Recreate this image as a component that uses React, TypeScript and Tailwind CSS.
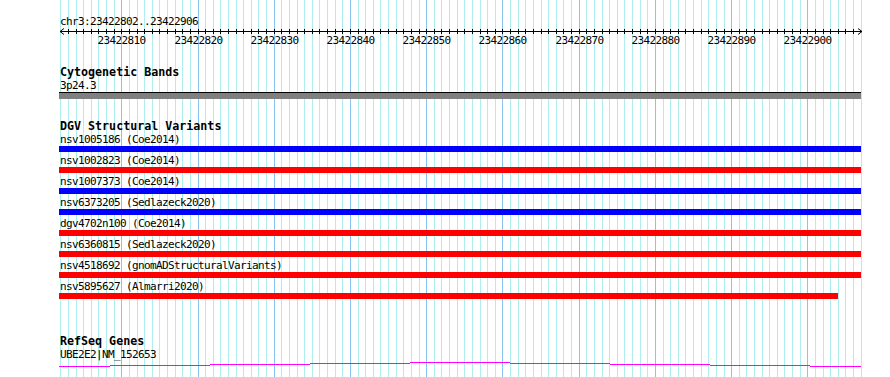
import React from "react";

const X0 = 60.3;
const BP = 7.623;
const START = 23422802;

const mono = "font-['DejaVu_Sans_Mono',monospace] text-black";
const small = `${mono} text-[11px] tracking-[-0.62px] leading-[13px] h-[13px] whitespace-pre`;
const bold = `${mono} font-bold text-[11.67px] leading-[13px] h-[13px] whitespace-pre`;

const variants = [
  { name: "nsv1005186 (Coe2014)", color: "bg-[#0000ff]", w: "w-[802px]" },
  { name: "nsv1002823 (Coe2014)", color: "bg-[#ff0000]", w: "w-[802px]" },
  { name: "nsv1007373 (Coe2014)", color: "bg-[#0000ff]", w: "w-[802px]" },
  { name: "nsv6373205 (Sedlazeck2020)", color: "bg-[#0000ff]", w: "w-[802px]" },
  { name: "dgv4702n100 (Coe2014)", color: "bg-[#ff0000]", w: "w-[802px]" },
  { name: "nsv6360815 (Sedlazeck2020)", color: "bg-[#ff0000]", w: "w-[802px]" },
  { name: "nsv4518692 (gnomADStructuralVariants)", color: "bg-[#ff0000]", w: "w-[802px]" },
  { name: "nsv5895627 (Almarri2020)", color: "bg-[#ff0000]", w: "w-[779px]" },
];

const bpX = (k: number) => Math.round(X0 + k * BP);
const ks = Array.from({ length: 106 }, (_, k) => k);

// background grid, one line per base, darker every 10 bp
function Grid() {
  return (
    <svg className="absolute inset-0" width={890} height={377} shapeRendering="crispEdges">
      {ks.map((k) => {
        const major = (START + k) % 10 === 0;
        return (
          <line
            key={k}
            x1={bpX(k) + 0.5}
            x2={bpX(k) + 0.5}
            y1={0}
            y2={377}
            stroke={major ? "#87c4f0" : "#aeeeee"}
            strokeWidth={1}
          />
        );
      })}
    </svg>
  );
}

function Ruler() {
  const right = bpX(105);
  return (
    <svg width={890} height={18} className="block" shapeRendering="crispEdges">
      <line x1={60} x2={right + 1} y1={3.5} y2={3.5} stroke="#000" />
      <path d="M60 3.5 L64 0.5 M60 3.5 L64 6.5" stroke="#000" fill="none" shapeRendering="auto" />
      <path d={`M${right + 1} 3.5 L${right - 3} 0.5 M${right + 1} 3.5 L${right - 3} 6.5`} stroke="#000" fill="none" shapeRendering="auto" />
      {ks.slice(1, 105).map((k) => (
        <line key={k} x1={bpX(k) + 0.5} x2={bpX(k) + 0.5} y1={1} y2={6} stroke="#000" />
      ))}
      {ks
        .filter((k) => (START + k) % 10 === 0)
        .map((k) => (
          <text
            key={k}
            x={bpX(k) + 0.5}
            y={16}
            textAnchor="middle"
            fontFamily="'DejaVu Sans Mono', monospace"
            fontSize={11}
            letterSpacing={-0.62}
            fill="#000"
          >
            {START + k}
          </text>
        ))}
    </svg>
  );
}

function GeneLine() {
  const segs: [number, number, number][] = [
    [59, 110, 5],
    [110, 210, 4],
    [210, 310, 3],
    [310, 410, 2],
    [410, 510, 1],
    [510, 610, 2],
    [610, 710, 3],
    [710, 810, 4],
    [810, 861, 5],
  ];
  return (
    <svg width={890} height={8} className="block" shapeRendering="crispEdges">
      {segs.map(([a, b, y], i) => (
        <line key={i} x1={a} x2={b} y1={y + 0.5} y2={y + 0.5} stroke="#ff00ff" />
      ))}
    </svg>
  );
}

export default function App() {
  return (
    <div className="relative w-[890px] h-[377px] overflow-hidden bg-white">
      <Grid />
      <div className="relative flex flex-col">
        <div className={`${small} mt-[15px] pl-[60px]`}>chr3:23422802..23422906</div>
        <Ruler />

        <div className={`${bold} mt-[20px] pl-[60px]`}>Cytogenetic Bands</div>
        <div className={`${small} pl-[60px]`}>3p24.3</div>
        <div className="ml-[59px] w-[802px] h-[7px] border-t border-black bg-[#808080]" />

        <div className={`${bold} mt-[21px] pl-[60px]`}>DGV Structural Variants</div>
        <div className="flex flex-col gap-[2px]">
          {variants.map((v) => (
            <div key={v.name} className="flex flex-col">
              <div className={`${small} pl-[60px]`}>{v.name}</div>
              <div className={`ml-[59px] h-[6px] ${v.w} ${v.color}`} />
            </div>
          ))}
        </div>

        <div className={`${bold} mt-[36px] h-[12px] pl-[60px]`}>RefSeq Genes</div>
        <div className={`${small} pl-[60px]`}>UBE2E2|NM_152653</div>
        <GeneLine />
      </div>
    </div>
  );
}
